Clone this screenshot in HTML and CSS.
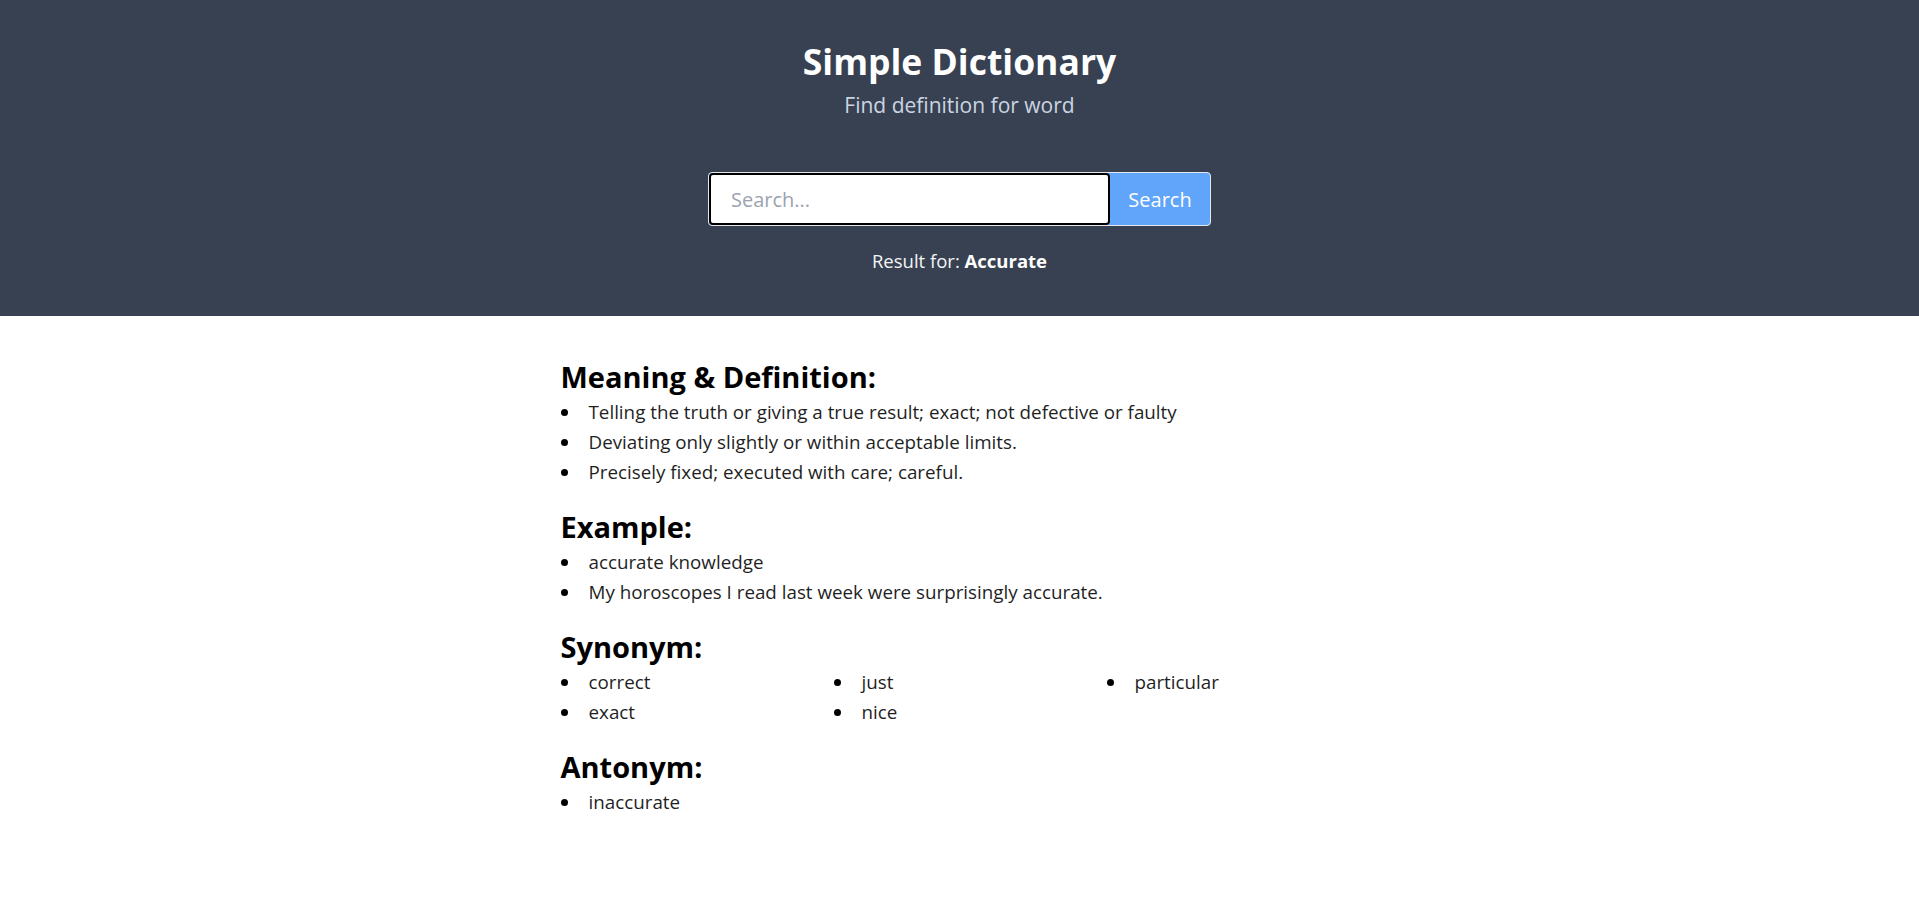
FILE: index.html
```html
<!DOCTYPE html>
<html lang="en">
<head>
<meta charset="utf-8">
<title>Simple Dictionary</title>
<link rel="stylesheet" href="styles.css">
</head>
<body>
<header class="hero">
  <h1 class="title">Simple Dictionary</h1>
  <p class="subtitle">Find definition for word</p>
  <form class="search">
    <input class="search-input" type="text" placeholder="Search...">
    <button class="search-btn" type="button">Search</button>
  </form>
  <p class="result">Result for: <strong>Accurate</strong></p>
</header>
<main class="content">
  <section class="block">
    <h2 class="block-title">Meaning &amp; Definition:</h2>
    <ul class="items">
      <li>Telling the truth or giving a true result; exact; not defective or faulty</li>
      <li>Deviating only slightly or within acceptable limits.</li>
      <li>Precisely fixed; executed with care; careful.</li>
    </ul>
  </section>
  <section class="block">
    <h2 class="block-title">Example:</h2>
    <ul class="items">
      <li>accurate knowledge</li>
      <li>My horoscopes I read last week were surprisingly accurate.</li>
    </ul>
  </section>
  <section class="block">
    <h2 class="block-title">Synonym:</h2>
    <ul class="items items-grid">
      <li>correct</li>
      <li>just</li>
      <li>particular</li>
      <li>exact</li>
      <li>nice</li>
    </ul>
  </section>
  <section class="block">
    <h2 class="block-title">Antonym:</h2>
    <ul class="items">
      <li>inaccurate</li>
    </ul>
  </section>
</main>
</body>
</html>
```

FILE: styles.css
```css
* { box-sizing: border-box; }

body {
  margin: 0;
  font-family: "Open Sans", "Noto Sans", sans-serif;
  color: #222;
  background: #fff;
}

.hero {
  background: #374151;
  height: 316px;
  padding-top: 41px;
  display: flex;
  flex-direction: column;
  align-items: center;
}

.title {
  margin: 0;
  font-size: 35.5px;
  line-height: 40px;
  font-weight: 700;
  color: #fff;
}

.subtitle {
  margin: 10px 0 0;
  font-size: 21px;
  line-height: 28px;
  color: #cbd5e1;
}

.search {
  margin-top: 53px;
  display: flex;
  width: 503px;
  height: 54px;
  border: 1px solid #e5e7eb;
  border-radius: 4px;
  background: #60a5fa;
}

.search-input {
  flex: 1;
  min-width: 0;
  border: 2px solid #000;
  border-radius: 4px;
  background: #fff;
  padding: 0 0 0 20px;
  font-family: inherit;
  font-size: 20px;
  color: #111;
  outline: none;
}

.search-input::placeholder { color: #9ca3af; }

.search-btn {
  width: 100px;
  border: 0;
  background: transparent;
  color: #fff;
  font-family: inherit;
  font-size: 20px;
  cursor: pointer;
}

.result {
  margin: 21px 0 0;
  font-size: 18.5px;
  line-height: 28px;
  color: #f3f4f6;
}

.result strong { color: #fff; }

.content {
  width: 800px;
  margin: 0 auto;
  padding-top: 43px;
  padding-left: 1px;
}

.block + .block { margin-top: 22px; }

.block-title {
  margin: 0;
  font-size: 29px;
  line-height: 36px;
  font-weight: 700;
  color: #000;
}

.items {
  margin: 0;
  padding: 2px 0 0;
  list-style: none;
}

.items li {
  font-size: 18.8px;
  line-height: 30px;
  display: flex;
  align-items: center;
  color: #1f1f1f;
}

.items li::before {
  content: "";
  width: 7px;
  height: 7px;
  border-radius: 50%;
  background: #000;
  margin-right: 21px;
  flex: none;
}

.items-grid {
  display: grid;
  grid-template-columns: repeat(3, 253px);
  column-gap: 20px;
}
```
